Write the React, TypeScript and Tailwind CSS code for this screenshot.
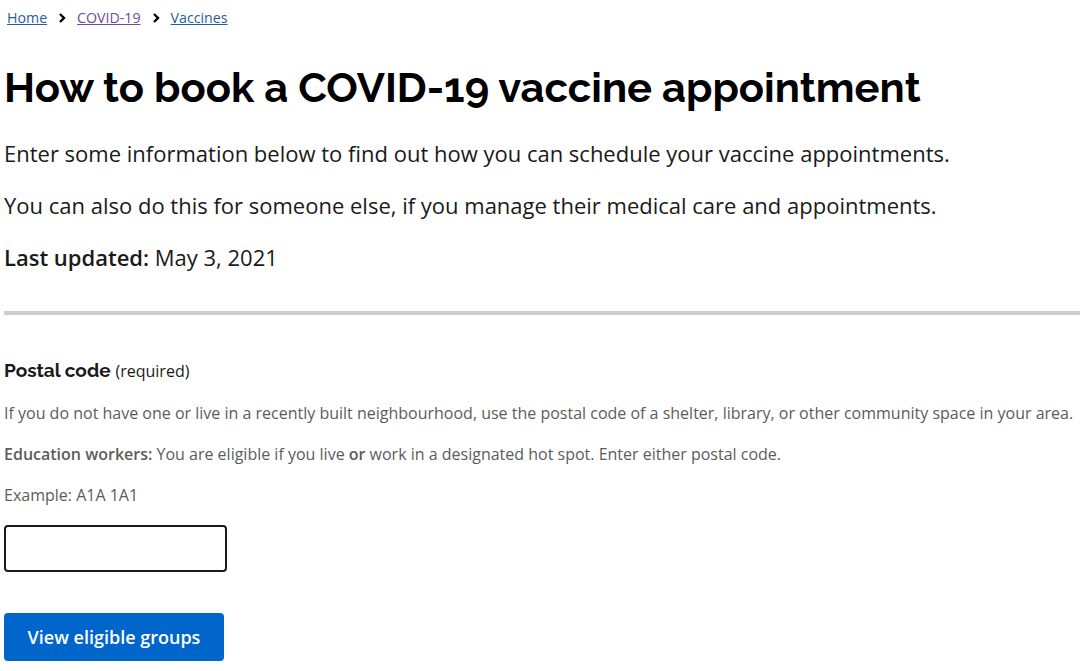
export default function App() {
  const heading = { fontFamily: "Raleway, Lato, 'Open Sans', sans-serif" };
  return (
    <main className="min-h-screen bg-white text-[#1a1a1a]" style={{ fontFamily: "'Open Sans', sans-serif" }}>
      <div className="pl-[4px]">
        {/* Breadcrumb */}
        <nav className="flex items-center gap-[10px] pt-[8px] text-[14.2px] leading-[20px]">
          <a href="#" className="ml-[3px] text-[#1f5f9e] underline">Home</a>
          <Chevron />
          <a href="#" className="text-[#6b4c9a] underline">COVID-19</a>
          <Chevron />
          <a href="#" className="text-[#1f5f9e] underline">Vaccines</a>
        </nav>

        <h1 className="mt-[34px] text-[41.7px] font-bold leading-[52px] text-black" style={heading}>
          How to book a COVID-19 vaccine appointment
        </h1>

        <p className="mt-[24px] text-[22px] leading-[30px]">
          Enter some information below to find out how you can schedule your vaccine appointments.
        </p>
        <p className="mt-[22px] text-[22px] leading-[30px]">
          You can also do this for someone else, if you manage their medical care and appointments.
        </p>
        <p className="mt-[22px] text-[22px] leading-[30px]">
          <strong className="font-semibold">Last updated:</strong> May 3, 2021
        </p>

        <hr className="mt-[39px] border-0 border-t-[4px] border-[#cccccc]" />

        <div className="mt-[42px]">
          <label className="block text-[19px] leading-[26px]">
            <span className="font-bold" style={heading}>Postal code</span>{" "}
            <span className="text-[16px]">(required)</span>
          </label>
          <div className="text-[16px] leading-[24px] text-[#5c5c5c]">
            <p className="mt-[17px] whitespace-nowrap">
              If you do not have one or live in a recently built neighbourhood, use the postal code of a shelter, library, or other community space in your area.
            </p>
            <p className="mt-[17px]">
              <strong className="font-semibold">Education workers:</strong> You are eligible if you live <strong className="font-semibold">or</strong> work in a designated hot spot. Enter either postal code.
            </p>
            <p className="mt-[17px]">Example: A1A 1A1</p>
          </div>
          <input
            type="text"
            className="mt-[18px] block h-[47px] w-[223px] rounded-[4px] border-2 border-[#1a1a1a] px-3 text-[18px] outline-none"
          />
          <button
            type="button"
            className="mt-[41px] block h-[48px] w-[220px] rounded-[4px] bg-[#0066cc] text-[18px] font-semibold text-white"
          >
            View eligible groups
          </button>
        </div>
      </div>
    </main>
  );
}

function Chevron() {
  return (
    <svg width="10" height="12" viewBox="0 0 10 12" className="text-black">
      <path d="M3 2l4 4-4 4" fill="none" stroke="currentColor" strokeWidth="2.4" />
    </svg>
  );
}
